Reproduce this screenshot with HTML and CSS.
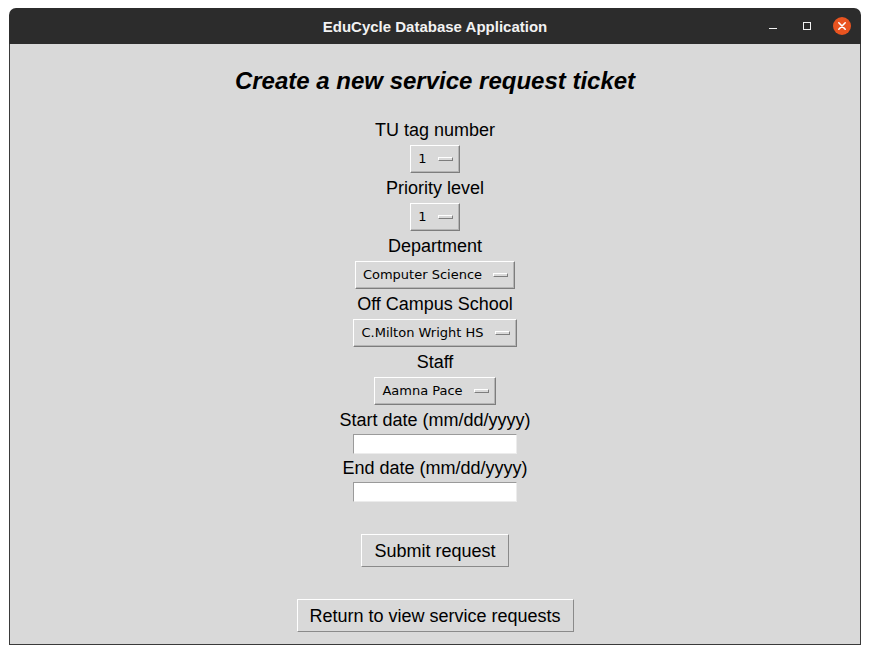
FILE: index.html
```html
<!DOCTYPE html>
<html>
<head>
<meta charset="utf-8">
<link rel="stylesheet" href="styles.css">
</head>
<body>
<div class="window">
  <div class="titlebar">
    <span class="title">EduCycle Database Application</span>
    <div class="controls">
      <span class="ctl-min"></span>
      <span class="ctl-max"></span>
      <span class="ctl-close">
        <svg width="18" height="18" viewBox="0 0 18 18"><circle cx="9" cy="9" r="9" fill="#e95420"/><path d="M5.8 5.8 L12.2 12.2 M12.2 5.8 L5.8 12.2" stroke="#fff" stroke-width="1.6" stroke-linecap="round"/></svg>
      </span>
    </div>
  </div>
  <div class="content">
    <h1 class="heading">Create a new service request ticket</h1>
    <div class="label">TU tag number</div>
    <div class="menu"><span class="menu-text">1</span><span class="ind"></span></div>
    <div class="label">Priority level</div>
    <div class="menu"><span class="menu-text">1</span><span class="ind"></span></div>
    <div class="label">Department</div>
    <div class="menu"><span class="menu-text">Computer Science</span><span class="ind"></span></div>
    <div class="label">Off Campus School</div>
    <div class="menu"><span class="menu-text">C.Milton Wright HS</span><span class="ind"></span></div>
    <div class="label">Staff</div>
    <div class="menu"><span class="menu-text">Aamna Pace</span><span class="ind"></span></div>
    <div class="label">Start date (mm/dd/yyyy)</div>
    <input class="entry" type="text">
    <div class="label">End date (mm/dd/yyyy)</div>
    <input class="entry" type="text">
    <button class="btn btn-submit">Submit request</button>
    <button class="btn btn-return">Return to view service requests</button>
  </div>
</div>
</body>
</html>
```

FILE: styles.css
```css
html, body {
  margin: 0;
  padding: 0;
  background: #ffffff;
}
body {
  padding: 8px 9px 0 9px;
  font-family: "Liberation Sans", Arial, sans-serif;
}
.window {
  width: 852px;
  height: 637px;
  display: flex;
  flex-direction: column;
}
.titlebar {
  height: 36px;
  background: #2c2c2c;
  border-radius: 7px 7px 0 0;
  display: flex;
  align-items: center;
  justify-content: center;
  position: relative;
  flex: none;
}
.title {
  color: #f2f2f2;
  font-family: "Liberation Sans", sans-serif;
  font-weight: bold;
  font-size: 15px;
  margin-top: 1px;
}
.controls {
  position: absolute;
  right: 10px;
  top: 9px;
  display: flex;
  align-items: center;
  height: 18px;
}
.ctl-min {
  width: 8px;
  height: 1px;
  background: #f2f2f2;
  margin-top: 4px;
  margin-right: 26px;
}
.ctl-max {
  width: 6px;
  height: 6px;
  border: 1px solid #f2f2f2;
  margin-right: 22px;
}
.ctl-close {
  width: 18px;
  height: 18px;
  display: block;
}
.ctl-close svg { display: block; }
.content {
  flex: 1;
  background: #d9d9d9;
  border: 1px solid #3a3a3a;
  border-top: none;
  display: flex;
  flex-direction: column;
  align-items: center;
  padding-top: 23px;
}
.heading {
  margin: 0 0 21px 0;
  font-size: 24px;
  line-height: 28px;
  font-weight: bold;
  font-style: italic;
  color: #000;
}
.label {
  font-size: 18px;
  line-height: 28px;
  height: 28px;
  color: #000;
}
.menu {
  height: 28px;
  box-sizing: border-box;
  margin: 1px 0;
  display: flex;
  align-items: center;
  padding: 0 6px 1px 7px;
  background: #d9d9d9;
  border: 1px solid;
  border-color: #ffffff #7d7d7d #7d7d7d #ffffff;
  box-shadow: inset -1px -1px 0 #b5b5b5;
}
.menu-text {
  font-family: "DejaVu Sans", sans-serif;
  font-size: 13px;
  color: #000;
  margin-right: 11px;
  white-space: nowrap;
}
.ind {
  width: 15px;
  height: 4px;
  box-sizing: border-box;
  background: #d9d9d9;
  border: 1px solid;
  border-color: #ffffff #7d7d7d #7d7d7d #ffffff;
  display: block;
  margin-top: 1px;
}
.entry {
  width: 164px;
  height: 20px;
  box-sizing: border-box;
  margin: 0;
  padding: 0;
  background: #ffffff;
  border: 1px solid;
  border-color: #9a9a9a #ececec #ececec #9a9a9a;
  outline: none;
}
.btn {
  font-family: "Liberation Sans", Arial, sans-serif;
  font-size: 18px;
  color: #000;
  background: #d9d9d9;
  height: 33px;
  box-sizing: border-box;
  border: 1px solid;
  border-color: #ffffff #8a8a8a #8a8a8a #ffffff;
  padding: 2px 0 0 0;
  margin: 0;
  white-space: nowrap;
}
.btn-submit {
  width: 148px;
  margin-top: 32px;
}
.btn-return {
  width: 277px;
  margin-top: 32px;
}
```
